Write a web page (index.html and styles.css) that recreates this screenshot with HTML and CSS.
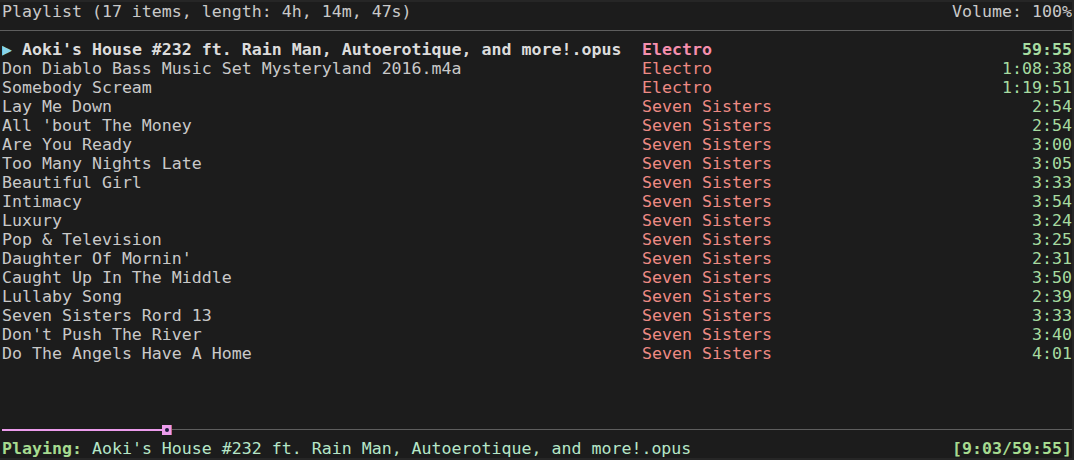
FILE: index.html
```html
<!DOCTYPE html>
<html>
<head>
<meta charset="utf-8">
<link rel="stylesheet" href="styles.css">
</head>
<body>
<div class="term">
  <div class="row header">
    <span class="title">Playlist (17 items, length: 4h, 14m, 47s)</span>
    <span class="volume">Volume: 100%</span>
  </div>
  <div class="row sep"><div class="sep-line"></div></div>
  <div class="list">
    <div class="row item current"><span class="name"><span class="arrow">▶</span> Aoki's House #232 ft. Rain Man, Autoerotique, and more!.opus</span><span class="genre">Electro</span><span class="time">59:55</span></div>
    <div class="row item"><span class="name">Don Diablo Bass Music Set Mysteryland 2016.m4a</span><span class="genre">Electro</span><span class="time">1:08:38</span></div>
    <div class="row item"><span class="name">Somebody Scream</span><span class="genre">Electro</span><span class="time">1:19:51</span></div>
    <div class="row item"><span class="name">Lay Me Down</span><span class="genre">Seven Sisters</span><span class="time">2:54</span></div>
    <div class="row item"><span class="name">All 'bout The Money</span><span class="genre">Seven Sisters</span><span class="time">2:54</span></div>
    <div class="row item"><span class="name">Are You Ready</span><span class="genre">Seven Sisters</span><span class="time">3:00</span></div>
    <div class="row item"><span class="name">Too Many Nights Late</span><span class="genre">Seven Sisters</span><span class="time">3:05</span></div>
    <div class="row item"><span class="name">Beautiful Girl</span><span class="genre">Seven Sisters</span><span class="time">3:33</span></div>
    <div class="row item"><span class="name">Intimacy</span><span class="genre">Seven Sisters</span><span class="time">3:54</span></div>
    <div class="row item"><span class="name">Luxury</span><span class="genre">Seven Sisters</span><span class="time">3:24</span></div>
    <div class="row item"><span class="name">Pop &amp; Television</span><span class="genre">Seven Sisters</span><span class="time">3:25</span></div>
    <div class="row item"><span class="name">Daughter Of Mornin'</span><span class="genre">Seven Sisters</span><span class="time">2:31</span></div>
    <div class="row item"><span class="name">Caught Up In The Middle</span><span class="genre">Seven Sisters</span><span class="time">3:50</span></div>
    <div class="row item"><span class="name">Lullaby Song</span><span class="genre">Seven Sisters</span><span class="time">2:39</span></div>
    <div class="row item"><span class="name">Seven Sisters Rord 13</span><span class="genre">Seven Sisters</span><span class="time">3:33</span></div>
    <div class="row item"><span class="name">Don't Push The River</span><span class="genre">Seven Sisters</span><span class="time">3:40</span></div>
    <div class="row item"><span class="name">Do The Angels Have A Home</span><span class="genre">Seven Sisters</span><span class="time">4:01</span></div>
  </div>
  <div class="row progress">
    <div class="bar-done"></div>
    <div class="knob"><div class="knob-dot"></div></div>
    <div class="bar-rest"></div>
  </div>
  <div class="row status">
    <span class="playing"><b class="label">Playing:</b> Aoki's House #232 ft. Rain Man, Autoerotique, and more!.opus</span>
    <span class="elapsed">[9:03/59:55]</span>
  </div>
</div>
</body>
</html>
```
FILE: styles.css
```css
html, body {
  margin: 0;
  padding: 0;
  background: #1c1c1c;
}
body {
  width: 1074px;
  height: 460px;
  overflow: hidden;
  box-sizing: border-box;
  border-top: 2px solid #262626;
  border-right: 2px solid #262626;
  border-bottom: 2px solid #262626;
}
.term {
  display: flex;
  flex-direction: column;
  height: 456px;
  padding-left: 2px;
  width: 1070px;
  font-family: "DejaVu Sans Mono", "Liberation Mono", monospace;
  font-size: 16.6px;
  line-height: 19px;
  color: #c9c9c9;
  white-space: pre;
}
.row {
  display: flex;
  height: 19px;
  align-items: center;
}
.header {
  justify-content: space-between;
}
.sep {
  margin-left: -2px;
  width: 1072px;
}
.sep-line {
  width: 100%;
  height: 1px;
  background: #5e5e5e;
}
.list {
  display: flex;
  flex-direction: column;
  flex: 1;
}
.item .name {
  width: 640px;
  overflow: hidden;
}
.item .genre {
  flex: 1;
  color: #ee8a84;
}
.item .time {
  color: #a6dba0;
  text-align: right;
}
.current .name {
  font-weight: bold;
  color: #dcdcdc;
}
.current .genre {
  font-weight: bold;
  color: #f58fae;
}
.current .time {
  font-weight: bold;
}
.arrow {
  color: #89d4ec;
}
.progress {
  align-items: center;
}
.bar-done {
  width: 160px;
  height: 2px;
  background: #ec9cec;
}
.knob {
  width: 10px;
  height: 10px;
  background: #ec9cec;
  box-sizing: border-box;
  border-right: 1px solid #c46a8a;
  display: flex;
  align-items: center;
  justify-content: center;
}
.knob-dot {
  width: 4px;
  height: 4px;
  border-radius: 2px;
  background: #1c1c3c;
}
.bar-rest {
  flex: 1;
  height: 1px;
  background: #5e5e5e;
}
.status {
  justify-content: space-between;
}
.playing {
  color: #b6e6c8;
}
.label {
  color: #a6db90;
  font-weight: bold;
}
.elapsed {
  color: #a6db90;
  font-weight: bold;
}
```
